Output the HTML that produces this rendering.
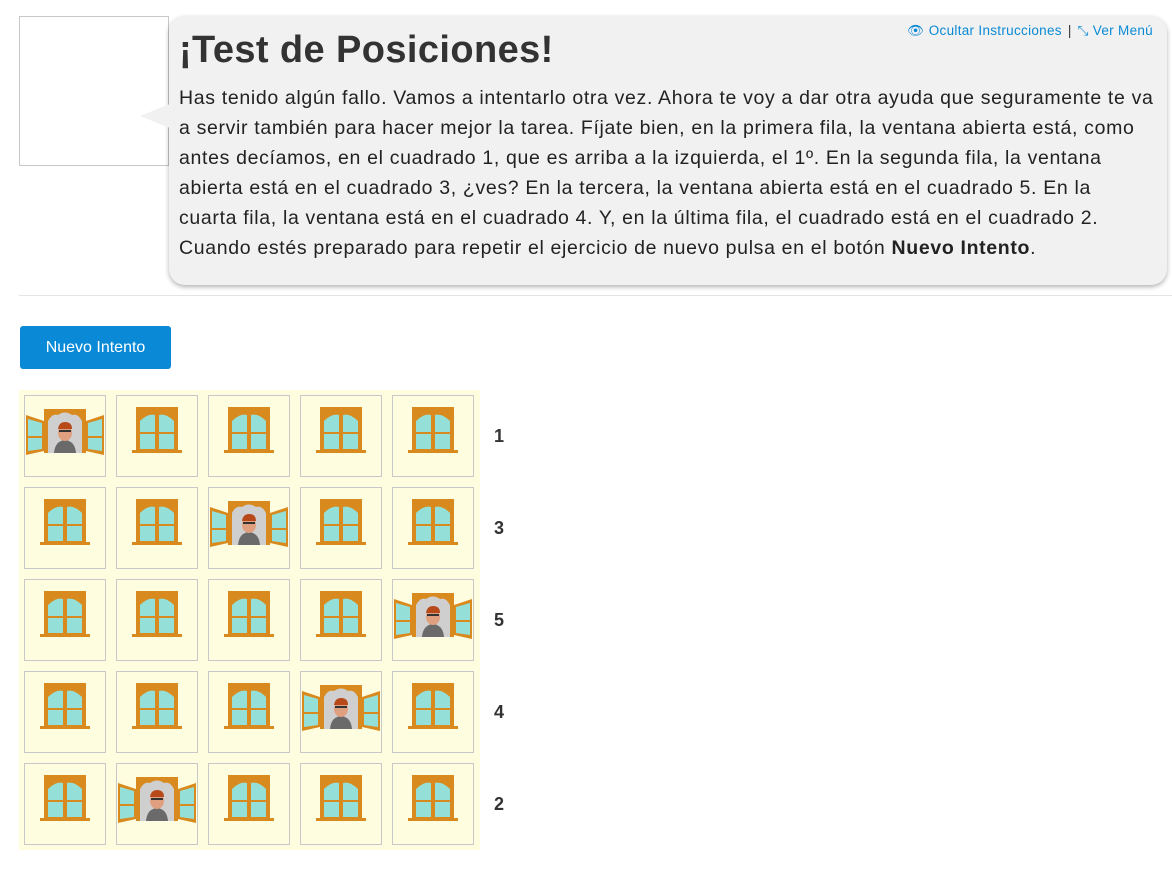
<!DOCTYPE html>
<html><head><meta charset="utf-8"><style>
body{margin:0;background:#fff;font-family:"Liberation Sans",Arial,sans-serif;color:#222;width:1172px;height:874px;overflow:hidden;position:relative}
.img{position:absolute;left:19px;top:16px;width:150px;height:150px;border:1px solid #c8c8c8;box-sizing:border-box}
.bubble{position:absolute;left:169px;top:16px;width:998px;height:269px;background:#f1f1f1;border-radius:16px;box-shadow:0 2px 5px rgba(0,0,0,.3)}
.arrow{position:absolute;left:140px;top:104px;width:0;height:0;border-top:12px solid transparent;border-bottom:12px solid transparent;border-right:30px solid #f1f1f1}
h1{position:absolute;left:10px;top:13px;margin:0;font-size:38px;font-weight:bold;color:#333;letter-spacing:0.4px}
.txt{position:absolute;left:10px;top:67px;width:990px;font-size:19.5px;line-height:30px;color:#222;letter-spacing:0.66px;white-space:nowrap}
.links{position:absolute;right:14px;top:7px;font-size:13.5px;color:#0a8ad6;letter-spacing:0.3px}
.links span.sep{color:#333;margin:0 6px}
hr{position:absolute;left:19px;top:295px;width:1153px;margin:0;border:0;border-top:1px solid #e4e4e4}
.btn{position:absolute;left:20px;top:326px;width:151px;height:43px;background:#0a8ad6;border-radius:3px;color:#fff;font-size:16px;line-height:43px;text-align:center}
.grid{position:absolute;left:19px;top:390px;width:461px;height:460px;background:#fffde0}
.cell{position:absolute;width:80px;height:80px;border:1px solid #c8c8c8;background:#fffde0}
.num{position:absolute;left:494px;font-size:18px;font-weight:bold;color:#333}
</style></head><body>
<svg width="0" height="0" style="position:absolute">
<defs>
<g id="c">
<rect x="20" y="12" width="42" height="44" fill="#d98a1f"/>
<path d="M24 26 Q32 18 39 20 V54 H24Z" fill="#94e0d8"/>
<path d="M43 20 Q50 18 58 26 V54 H43Z" fill="#94e0d8"/>
<rect x="24" y="37" width="15" height="2" fill="#d98a1f"/><rect x="43" y="37" width="15" height="2" fill="#d98a1f"/>
<rect x="16" y="55" width="50" height="3" fill="#d98a1f"/>
</g>
<g id="o">
<rect x="20" y="14" width="42" height="44" fill="#d98a1f"/>
<path d="M24 58 V26 Q28 18 34 20 Q41 15 48 20 Q54 18 58 26 V58Z" fill="#cfcfcf"/>
<path d="M2 20 L20 26 V56 L2 60Z" fill="#d98a1f"/>
<path d="M4 24 L18 28 V41 L4 41Z M4 43 L18 43 V54 L4 56Z" fill="#94e0d8"/>
<path d="M80 20 L62 26 V56 L80 60Z" fill="#d98a1f"/>
<path d="M78 24 L64 28 V41 L78 41Z M78 43 L64 43 V54 L78 56Z" fill="#94e0d8"/>
<path d="M30 58 Q31 46 41 45 Q51 46 52 58Z" fill="#6a6a6a"/>
<ellipse cx="41" cy="38" rx="7" ry="8" fill="#e0a080"/>
<path d="M34 34 Q35 27 41 27 Q48 27 48 34Z" fill="#b84a1a"/>
<rect x="35" y="35" width="12" height="2" fill="#333"/>
</g>
</defs></svg>
<div class="img"></div>
<div class="bubble">
<div class="links">👁 Ocultar Instrucciones<span class="sep">|</span>⤡ Ver Menú</div>
<h1>¡Test de Posiciones!</h1>
<div class="txt">Has tenido algún fallo. Vamos a intentarlo otra vez. Ahora te voy a dar otra ayuda que seguramente te va<br>a servir también para hacer mejor la tarea. Fíjate bien, en la primera fila, la ventana abierta está, como<br>antes decíamos, en el cuadrado 1, que es arriba a la izquierda, el 1º. En la segunda fila, la ventana<br>abierta está en el cuadrado 3, ¿ves? En la tercera, la ventana abierta está en el cuadrado 5. En la<br>cuarta fila, la ventana está en el cuadrado 4. Y, en la última fila, el cuadrado está en el cuadrado 2.<br>Cuando estés preparado para repetir el ejercicio de nuevo pulsa en el botón <b>Nuevo Intento</b>.</div>
</div>
<div class="arrow"></div>
<hr>
<div class="btn">Nuevo Intento</div>
<div class="grid"></div>
<div id="g"></div>
<script>
var open=[1,3,5,4,2],h='';
for(var r=0;r<5;r++){for(var c=0;c<5;c++){var x=24+c*92,y=395+r*92;
h+='<div class="cell" style="left:'+x+'px;top:'+y+'px"><svg width="80" height="80" viewBox="1 1 80 80"><use href="#'+(open[r]==c+1?'o':'c')+'"/></svg></div>';}
h+='<div class="num" style="top:'+(426+r*92)+'px">'+open[r]+'</div>';}
document.getElementById('g').innerHTML=h;
</script>
</body></html>
